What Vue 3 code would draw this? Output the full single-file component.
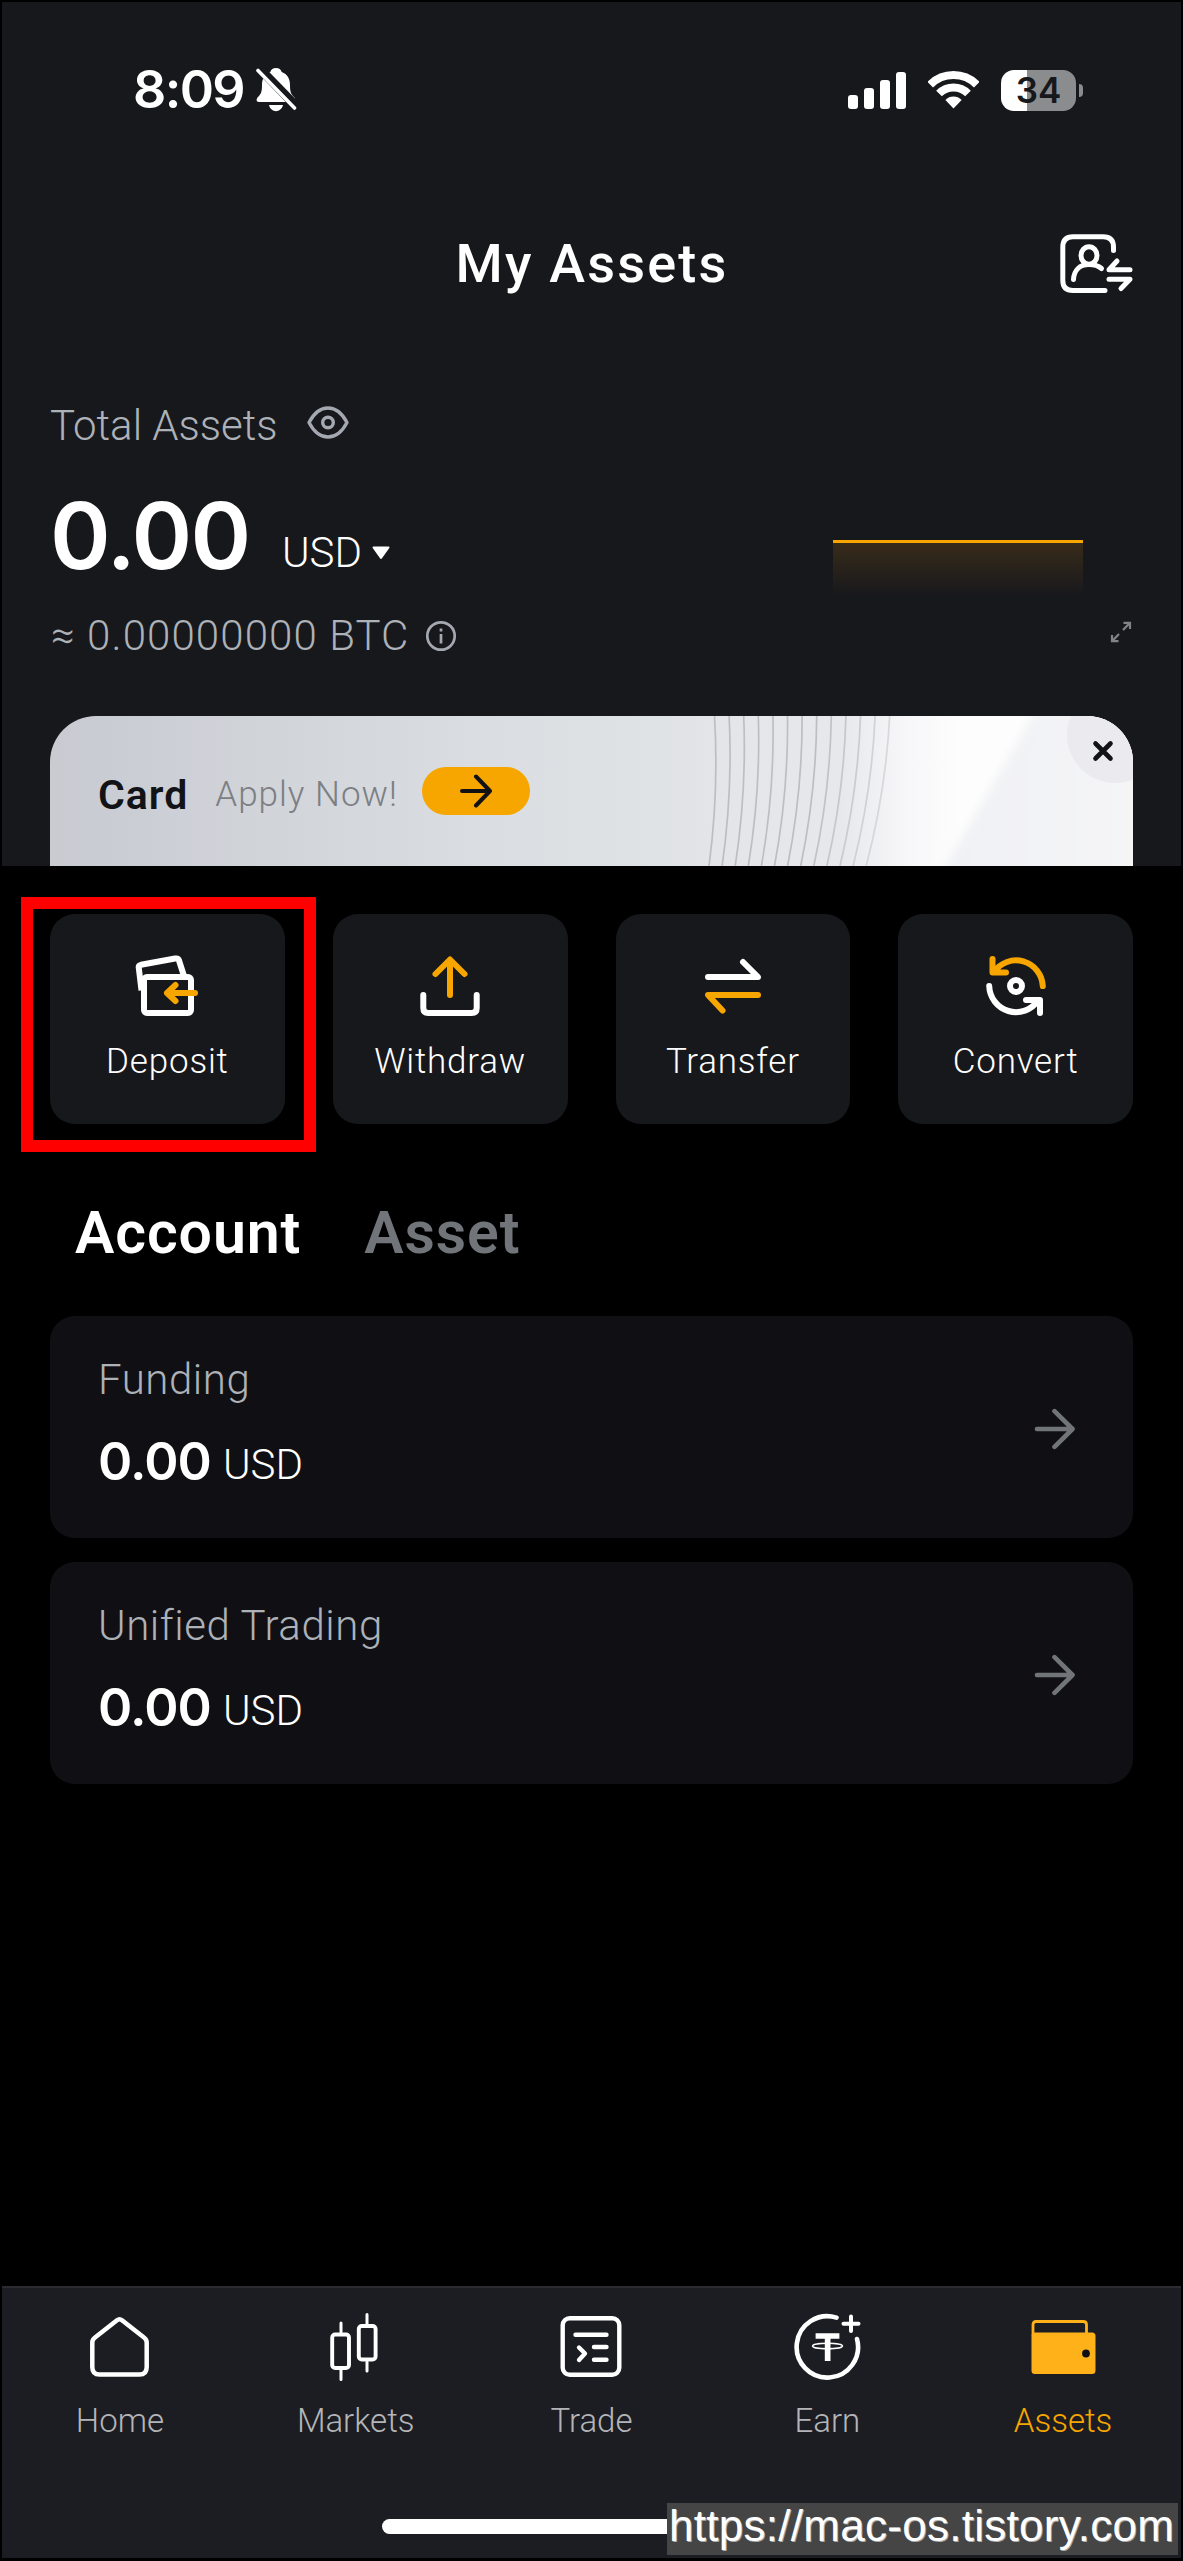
<script setup>
const bars = [14, 21, 29, 37]

const actions = [
  { id: 'deposit', label: 'Deposit' },
  { id: 'withdraw', label: 'Withdraw' },
  { id: 'transfer', label: 'Transfer' },
  { id: 'convert', label: 'Convert' }
]

const accounts = [
  { name: 'Funding', amount: '0.00', unit: 'USD' },
  { name: 'Unified Trading', amount: '0.00', unit: 'USD' }
]

const navItems = [
  { id: 'home', label: 'Home' },
  { id: 'markets', label: 'Markets' },
  { id: 'trade', label: 'Trade' },
  { id: 'earn', label: 'Earn' },
  { id: 'assets', label: 'Assets', active: true }
]

const waves = Array.from({ length: 13 }, (_, i) => ({
  d: `M${664.5 + 14.6 * i} 0Q${669 + 13.9 * i} 75 ${659 + 13.1 * i} 150`,
  opacity: i < 8 ? 1 : 1 - (i - 7) * 0.1
}))
</script>

<template>
  <div class="screen">
    <header class="top">
      <div class="status">
        <div class="status-left">
          <span class="time">8:09</span>
          <svg class="bell" width="41" height="44" viewBox="0 0 41 44">
            <path fill="#fff" d="M20 0C17 0 15 1.5 14.3 4 8.500 6 6 11 6 17 6 24 5 26 2 29 0 31 0 34 3 34H37C40 34 40 31 38 29 35 26 34 24 34 17 34 11 31.500 6 25.700 4 25 1.500 23 0 20 0ZM13 37H27C26 41 23 43.200 20 43.200S14 41 13 37Z" />
            <path d="M3 0 41 39" stroke="#17181c" stroke-width="9" />
            <path d="M2 2.500 38.500 40" stroke="#fff" stroke-width="3.600" stroke-linecap="round" />
          </svg>
        </div>
        <div class="status-right">
          <div class="signal">
            <i v-for="h in bars" :key="h" :style="{ height: h + 'px' }"></i>
          </div>
          <svg width="51" height="38" viewBox="0 0 51 38">
            <g fill="none" stroke="#fff" stroke-width="8">
              <path d="M2.200 13.700A33 33 0 0 1 48.800 13.700M11 22.500A20.500 20.500 0 0 1 40 22.500" />
            </g>
            <path fill="#fff" d="M25.500 37.500 17.400 28.900A11.500 11.500 0 0 1 33.600 28.900Z" />
          </svg>
          <div class="battery"><div class="cell">34</div><div class="nub"></div></div>
        </div>
      </div>

      <div class="title-row">
        <h1>My Assets</h1>
        <svg width="73" height="60" viewBox="0 0 73 60" fill="none" stroke="#fff" stroke-width="5" stroke-linecap="round" stroke-linejoin="round">
          <path d="M53.500 16.500V13Q53.500 2.800 43 2.800H13Q2.800 2.800 2.800 13V46.500Q2.800 56.500 13 56.500H45" />
          <ellipse cx="29" cy="21.500" rx="8" ry="8.800" />
          <path d="M13.500 45.500C14 36 20 30.500 29 30.500 34 30.500 38 31.500 41.500 34.500M70 35.700H49L57 27M49 45.300H70L61 54.500" />
        </svg>
      </div>

      <div class="summary">
        <div class="summary-main">
          <div class="total-label">
            <span class="body-text">Total Assets</span>
            <svg width="42" height="33" viewBox="0 0 42 33" fill="none" stroke="#a4a8b0" stroke-width="3.400">
              <path stroke-linejoin="round" d="M2 16.500C7 7 13 2 21 2S35 7 40 16.500C35 26 29 31 21 31S7 26 2 16.500Z" />
              <circle cx="21" cy="16.500" r="5.300" />
            </svg>
          </div>
          <div class="balance">
            <span class="balance-value">0.00</span>
            <span class="balance-unit">USD</span>
            <svg class="caret" width="18" height="14" viewBox="0 0 18 14"><path fill="#fff" stroke="#fff" stroke-width="2" stroke-linejoin="round" d="M1.500 1.500H16.500L9 12Z" /></svg>
          </div>
          <div class="btc">
            <span class="body-text btc-value">≈ 0.00000000 BTC</span>
            <svg width="32" height="32" viewBox="0 0 32 32" fill="none" stroke="#a4a8b0" stroke-width="2.700">
              <circle cx="16" cy="16" r="13.700" /><path d="M16 8.500V11.500M16 14V23.500" />
            </svg>
          </div>
        </div>
        <div class="summary-side">
          <div class="spark"></div>
          <svg class="expand" width="22" height="22" viewBox="0 0 22 22" fill="none" stroke="#818388" stroke-width="2.200">
            <path d="M13 9 19.500 2.200M13.500 1.800H20V8M9 13 2.500 19.800M8.500 20.200H2V14" />
          </svg>
        </div>
      </div>

      <section class="promo">
        <svg class="promo-art" width="1083" height="150" viewBox="0 0 1083 150">
          <defs>
            <linearGradient id="metal"><stop offset="0" stop-color="#c9cbd1" /><stop offset=".07" stop-color="#cbcdd5" /><stop offset=".18" stop-color="#d0d3d8" /><stop offset=".4" stop-color="#dadde1" /><stop offset=".57" stop-color="#e0e3e6" /><stop offset=".65" stop-color="#e5e6ea" /><stop offset=".73" stop-color="#e7e8ec" /><stop offset=".79" stop-color="#f7f7f9" /><stop offset=".84" stop-color="#fdfdfd" /><stop offset="1" stop-color="#fdfdfd" /></linearGradient>
            <linearGradient id="facet"><stop offset="0" stop-color="#f0f1f4" /><stop offset="1" stop-color="#f5f5f7" /></linearGradient>
            <filter id="soften"><feGaussianBlur stdDeviation="5" /></filter>
          </defs>
          <rect width="1083" height="150" fill="url(#metal)" />
          <path d="M994-20 884 170H1110V-20Z" fill="url(#facet)" filter="url(#soften)" />
          <g fill="none" stroke="#bdbec2" stroke-width="1.700">
            <path v-for="(w, i) in waves" :key="i" :d="w.d" :opacity="w.opacity" />
          </g>
          <circle cx="1065" cy="19" r="48" fill="#ebeaee" />
          <path d="M1045.500 27.500 1060.500 42.500M1060.500 27.500 1045.500 42.500" stroke="#121317" stroke-width="4.600" stroke-linecap="round" />
        </svg>
        <div class="promo-content">
          <strong>Card</strong>
          <span>Apply Now!</span>
          <div class="pill">
            <svg width="32" height="34" viewBox="0 0 32 34" fill="none" stroke="#121214" stroke-width="4" stroke-linecap="round" stroke-linejoin="round"><path d="M2 17H30M16 2.500 30 17 16 31.500" /></svg>
          </div>
        </div>
      </section>
    </header>

    <main>
      <div class="actions">
        <div v-for="a in actions" :key="a.id" class="action">
          <svg width="64" height="62" viewBox="0 0 64 62" fill="none" stroke="#fff" stroke-width="6" stroke-linecap="round" stroke-linejoin="round">
            <template v-if="a.id === 'deposit'">
              <path stroke-linecap="butt" d="M6.500 35.500 3.800 13Q3.300 10.500 6 9.800L40 3.500Q43.500 3 44 5.500L49 21" />
              <rect x="9" y="22" width="47" height="36" rx="3" />
              <path stroke="#f7a600" d="M60 38H32M40.500 30 32 38 40.500 46" />
            </template>
            <template v-else-if="a.id === 'withdraw'">
              <path d="M5.300 40V53Q5.300 58 10.300 58H53.700Q58.700 58 58.700 53V40" />
              <path stroke="#f7a600" d="M32 40V5M17.500 19 32 4.500 46.500 19" />
            </template>
            <template v-else-if="a.id === 'transfer'">
              <path d="M7 22H57L42 7" /><path stroke="#f7a600" d="M57 40H7L21.500 55.500" />
            </template>
            <template v-else>
              <path d="M5.200 31A26.800 27 0 0 0 54 45.500M42 45H56V58" />
              <path stroke="#f7a600" d="M58.800 31A26.800 27 0 0 0 10 17M8.500 4V17.500H22" />
              <circle cx="32" cy="31" r="6" />
            </template>
          </svg>
          <span>{{ a.label }}</span>
          <div v-if="a.id === 'deposit'" class="highlight"></div>
        </div>
      </div>

      <div class="tabs">
        <span class="tab tab-active">Account</span>
        <span class="tab">Asset</span>
      </div>

      <div class="accounts">
        <div v-for="acc in accounts" :key="acc.name" class="account">
          <div>
            <div class="account-name">{{ acc.name }}</div>
            <div class="account-amount"><b>{{ acc.amount }}</b><span>{{ acc.unit }}</span></div>
          </div>
          <svg width="42" height="42" viewBox="0 0 42 42" fill="none" stroke="#71757a" stroke-width="4.600" stroke-linecap="round" stroke-linejoin="round"><path d="M3 21H38.500M20.500 3.200 38.500 21 20.500 38.800" /></svg>
        </div>
      </div>
    </main>

    <nav>
      <div v-for="n in navItems" :key="n.id" class="nav-item" :class="{ active: n.active }">
        <svg width="70" height="70" viewBox="0 0 70 70" fill="none" stroke="#fff" stroke-linecap="round" stroke-linejoin="round">
          <g v-if="n.id === 'home'" transform="translate(5 5)" stroke-width="4.500">
            <path d="M27 3.300Q29.500 1.300 32 3.300L54 20.500Q56.700 22.500 56.700 25.500V50Q56.700 57.500 49.500 57.500H9.500Q2.300 57.500 2.300 50V25.500Q2.300 22.500 5 20.500Z" />
          </g>
          <g v-else-if="n.id === 'markets'" transform="translate(9 0)">
            <path stroke-width="3" d="M11 11V20M11 58V67.500M37 2.500V12M37 50V59" />
            <g stroke-width="3.900"><rect x="2.200" y="22.500" width="16.800" height="33.500" rx="3" /><rect x="28.800" y="14" width="16.800" height="33.500" rx="3" /></g>
          </g>
          <g v-else-if="n.id === 'trade'" transform="translate(4.500 4)" stroke-width="4.400">
            <rect x="2.200" y="2.200" width="56.600" height="56.600" rx="7" />
            <path d="M15 18.700H46M18.500 31.500 24.500 37.500 18.500 44M33.500 31H46M33.500 43.700H46" />
          </g>
          <g v-else-if="n.id === 'earn'" transform="translate(3 2)" stroke-width="4.600">
            <path d="M41.500 3.600A30.700 30.700 0 1 0 62 25" />
            <path stroke-width="4" d="M56 2.500V17M48.500 9.800H63.500" />
            <path stroke="none" fill="#fff" d="M20.600 19.300H44.400V24.700H35.500V47H29.800V24.700H20.600Z" />
            <ellipse cx="32.500" cy="32" rx="15" ry="2.800" stroke-width="1.400" />
          </g>
          <g v-else transform="translate(3.500 8)" stroke="#ffb11a" stroke-width="2.800">
            <path d="M1.500 15V4.500Q1.500 1.500 4.500 1.500H51.500Q55 1.500 55 4.500V15" />
            <rect x="1" y="13.500" width="62" height="39.500" rx="2.500" fill="#ffb11a" stroke-width="2" />
            <circle cx="54.500" cy="33.500" r="3.900" fill="#101014" stroke="none" />
          </g>
        </svg>
        <span>{{ n.label }}</span>
      </div>
      <div class="home-indicator"></div>
      <div class="watermark">https://mac-os.tistory.com</div>
    </nav>
  </div>
</template>

<style>
body { margin: 0; background: #000; }
</style>

<style scoped>
.screen { box-sizing: border-box; width: 1183px; height: 2561px; padding: 2px 2px 3px; background: #000; color: #fff; font-family: Roboto, "Open Sans", sans-serif; display: flex; flex-direction: column; overflow: hidden; white-space: nowrap; }
svg { display: block; flex: none; }
.top { height: 864px; flex: none; background: #17181c; padding: 0 48px; box-sizing: border-box; }
.status { height: 176px; display: flex; justify-content: space-between; align-items: center; padding: 0 50px 0 83px; }
.status-left { display: flex; align-items: center; gap: 12px; }
.time { font-family: Inter, sans-serif; font-size: 52px; font-weight: 600; line-height: 60px; letter-spacing: -1.6px; }
.status-right { display: flex; align-items: center; gap: 22px; }
.signal { display: flex; align-items: flex-end; gap: 6px; }
.signal i { width: 10px; background: #fff; border-radius: 3px; }
.battery { display: flex; align-items: center; gap: 3px; }
.cell { width: 75px; height: 41px; border-radius: 13px; background: linear-gradient(90deg, #fff 26px, #8b8c8e 26px); color: #17181c; font-family: Inter, sans-serif; font-weight: 600; font-size: 35px; line-height: 41px; text-align: center; }
.nub { width: 4px; height: 13px; background: #8b8c8e; border-radius: 0 5px 5px 0; }

.title-row { height: 172px; display: grid; grid-template-columns: 1fr auto 1fr; align-items: center; }
.title-row h1 { grid-column: 2; margin: 0; font-size: 54px; font-weight: 500; line-height: 64px; letter-spacing: 2.2px; padding-left: 1px; }
.title-row svg { justify-self: end; }

.summary { display: flex; justify-content: space-between; height: 320px; margin-top: 46px; }
.total-label, .btc { display: flex; align-items: center; height: 60px; }
.total-label { gap: 29px; }
.total-label svg { margin-bottom: 8px; }
.body-text { font-size: 42px; font-weight: 350; color: #adb1b8; line-height: 50px; }
.balance { display: flex; align-items: flex-start; height: 120px; margin-top: 21px; }
.balance-value { width: 206px; font-family: Inter, sans-serif; font-size: 92px; font-weight: 600; line-height: 117px; letter-spacing: -1.7px; }
.balance-unit { font-size: 42px; font-weight: 350; line-height: 50px; margin: 51px 0 0 26px; }
.caret { margin: 69px 0 0 10px; }
.btc { gap: 16px; margin-top: 9px; padding-left: 1px; }
.btc-value { letter-spacing: 1.1px; }
.summary-side { display: flex; flex-direction: column; padding-top: 144px; }
.spark { box-sizing: border-box; width: 250px; height: 56px; border-top: 3px solid #f7a600; background: linear-gradient(#382b1a, #17181c); margin-right: 50px; }
.expand { align-self: flex-end; margin: 25px 1px 0 0; }

.promo { position: relative; height: 150px; border-radius: 46px 46px 0 0; overflow: hidden; color: #121317; }
.promo-art { position: absolute; inset: 0; }
.promo-content { position: relative; display: flex; align-items: center; height: 150px; padding-left: 48px; }
.promo strong { font-size: 41px; font-weight: 600; line-height: 50px; padding-top: 8px; letter-spacing: 1px; }
.promo span { font-size: 35px; font-weight: 350; color: #7c7f84; line-height: 44px; margin-left: 27px; padding-top: 8px; letter-spacing: 1px; }
.pill { width: 108px; height: 48px; border-radius: 24px; background: #f7a600; margin-left: 24px; display: flex; align-items: center; justify-content: center; }

main { flex: 1; padding: 48px 48px 0; }
.actions { display: grid; grid-template-columns: repeat(4, 1fr); gap: 48px; }
.action { position: relative; height: 210px; box-sizing: border-box; border-radius: 25px; background: #17181c; display: flex; flex-direction: column; align-items: center; padding-top: 41px; }
.action span { font-size: 35px; font-weight: 350; line-height: 44px; margin-top: 23px; letter-spacing: 0.8px; }
.highlight { position: absolute; inset: -17px -31px -28px -29px; border: 12px solid #f00; }
.tabs { display: flex; gap: 63px; align-items: center; height: 80px; margin: 68px 0 44px 25px; }
.tab { font-size: 59px; font-weight: 600; color: #71757a; letter-spacing: 0.9px; }
.tab-active { color: #fff; }
.accounts { display: flex; flex-direction: column; gap: 24px; }
.account { height: 222px; box-sizing: border-box; border-radius: 25px; background: #101014; display: flex; justify-content: space-between; padding: 39px 57px 0 48px; }
.account svg { margin-top: 53px; }
.account-name { font-size: 42px; font-weight: 350; color: #adb1b8; line-height: 50px; letter-spacing: 0.55px; }
.account-amount { display: flex; align-items: flex-start; margin-top: 27px; }
.account-amount b { width: 116px; font-family: Inter, sans-serif; font-size: 52px; font-weight: 600; line-height: 60px; letter-spacing: -0.9px; }
.account-amount span { font-size: 42px; font-weight: 350; line-height: 50px; margin: 8px 0 0 9px; }

nav { position: relative; height: 272px; flex: none; box-sizing: border-box; background: #1c1d22; border-top: 2px solid #2b2c31; display: grid; grid-template-columns: repeat(5, 1fr); }
.nav-item { display: flex; flex-direction: column; align-items: center; padding-top: 24px; font-size: 33px; font-weight: 350; color: #b4b5b8; }
.nav-item span { line-height: 40px; margin-top: 19px; }
.nav-item.active { color: #f7a600; }
.home-indicator { position: absolute; left: 380px; top: 231px; width: 420px; height: 15px; border-radius: 8px; background: #fff; }
.watermark { position: absolute; right: 3px; bottom: 3px; box-sizing: border-box; width: 511px; height: 52px; padding-left: 2px; background: #454545; font: 44px/46px "Liberation Sans", sans-serif; letter-spacing: 0.28px; text-shadow: 1px 1px 0 #aaa; }
</style>
